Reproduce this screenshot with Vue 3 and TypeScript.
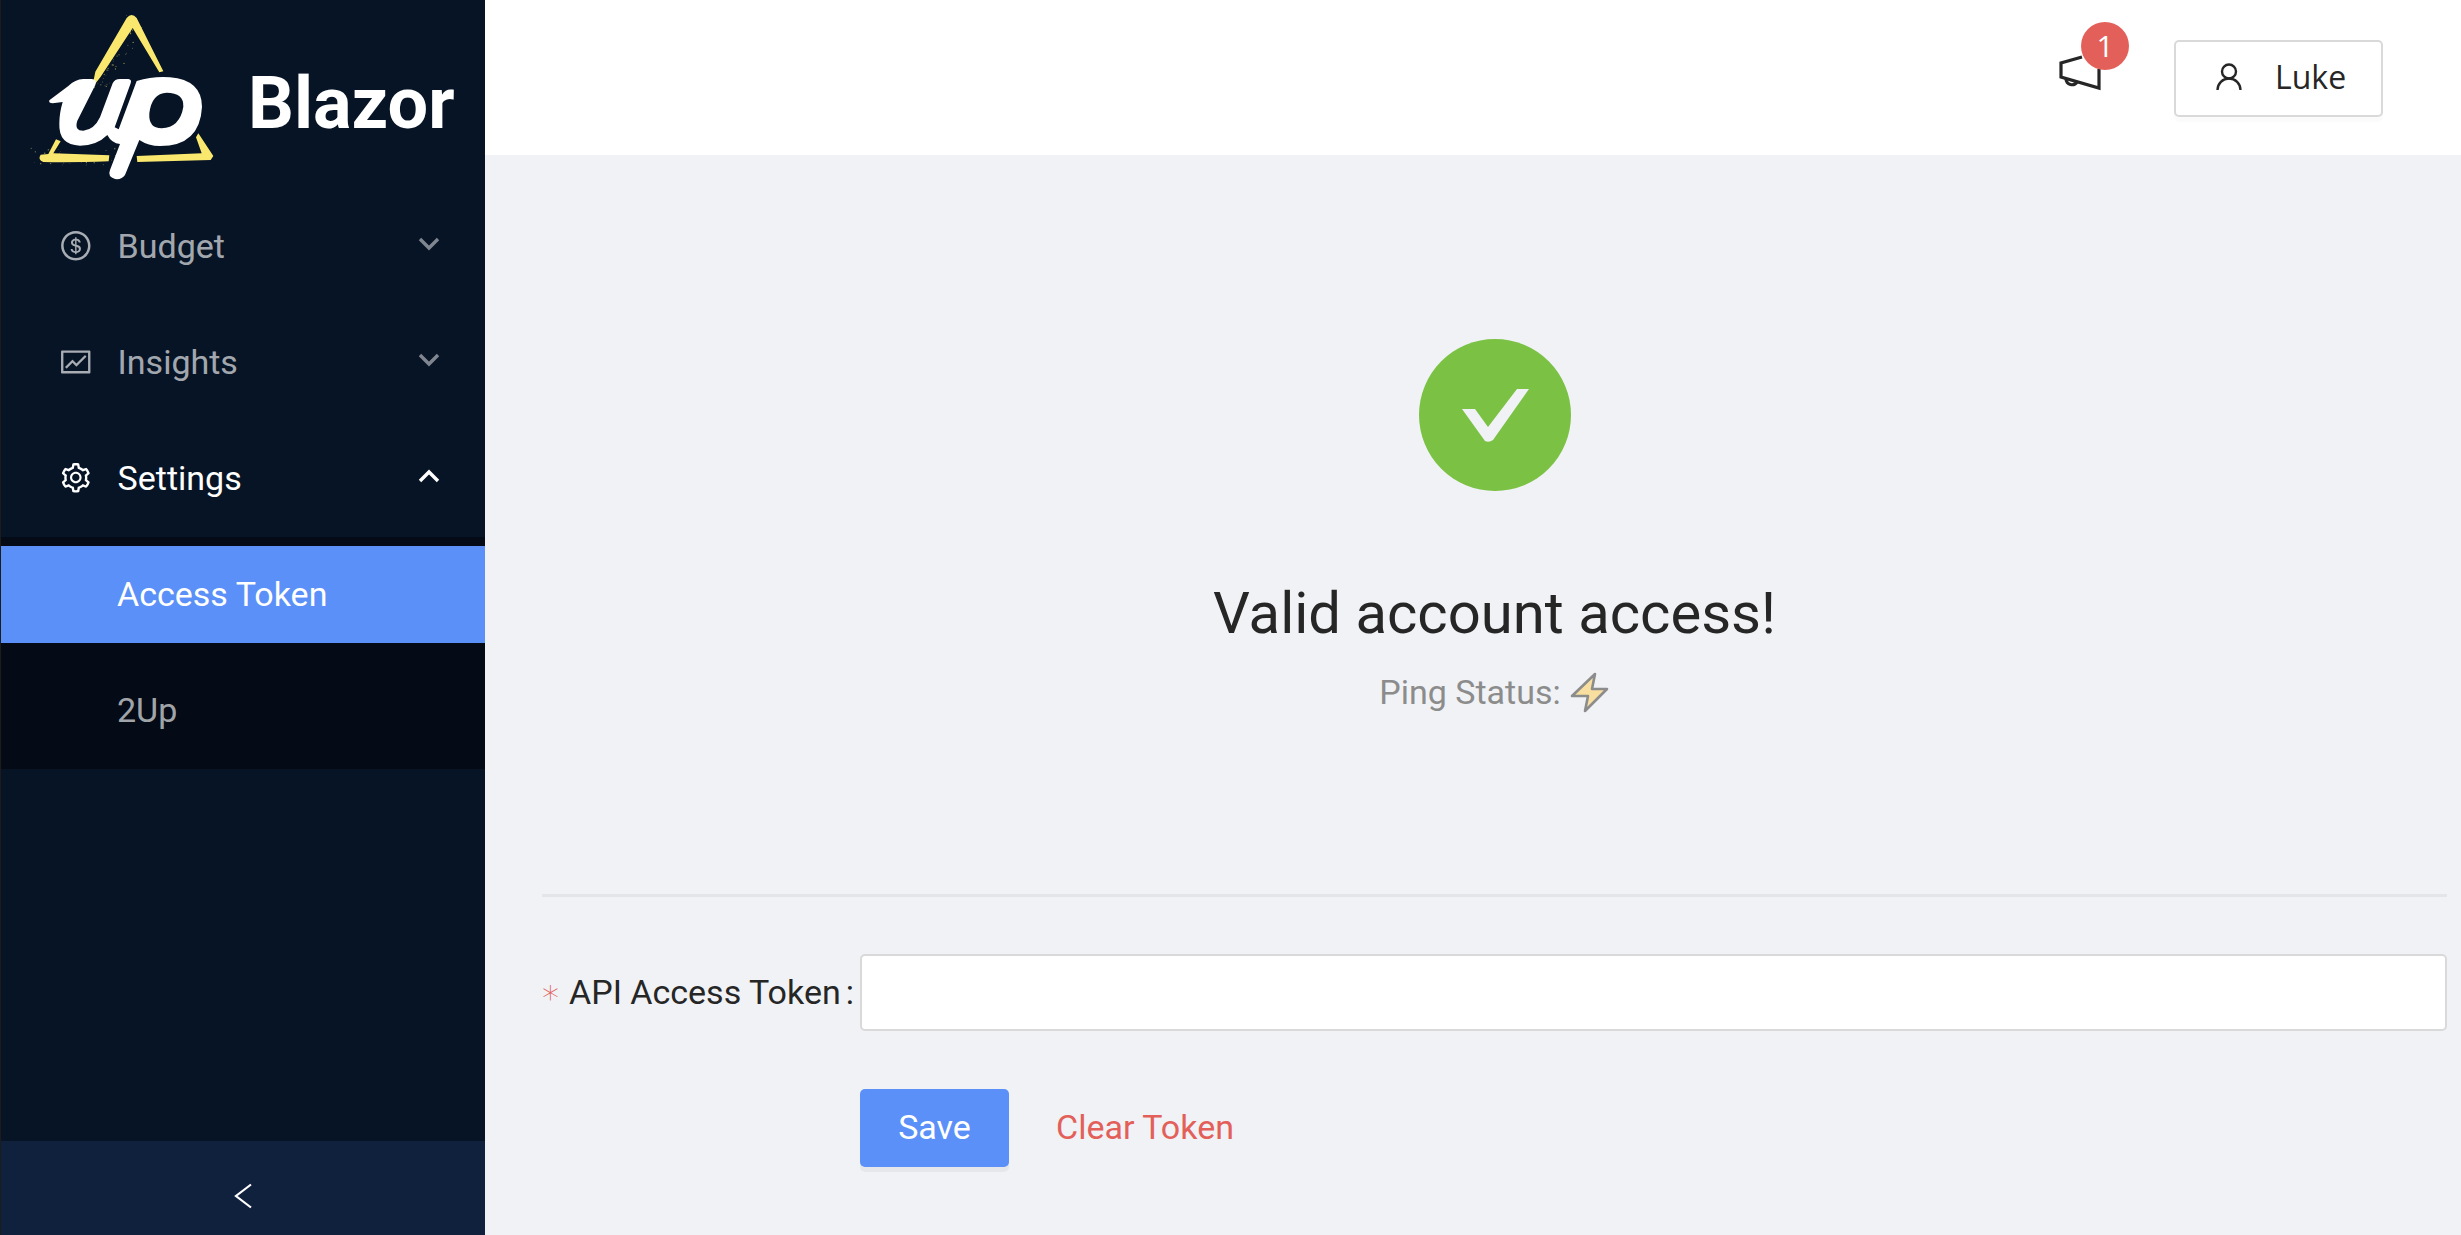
<template>
  <div class="layout">
    <aside class="sider">
      <div class="brand">
        <svg class="logo" viewBox="0 0 630 570">
          <g fill="#f9e86d">
            <path d="M216 264 L226 215 L320 54 Q335 36 350 54 L430 214 L418 217 L338 84 L242 230 Z" />
            <path d="M108 418 L122 424 L100 460 L268 466 L266 484 Q150 488 70 486 Q52 478 62 464 L85 462 Z" />
            <path d="M535 400 L580 468 L572 480 L352 486 L350 468 L545 460 L528 412 Z" />
            <circle v-for="(d, i) in dust" :key="i" :cx="d.x" :cy="d.y" :r="d.r" :opacity="d.o" />
          </g>
          <path
            fill="#fff"
            fill-rule="evenodd"
            d="M88 301 L145 258 Q165 238 190 237 L215 237 Q232 238 226 255 L172 362 Q162 392 190 392 Q222 390 240 352 L278 250 Q284 237 300 237 L325 237 Q336 238 332 250 L284 382 L296 388 L350 243 Q400 228 450 232 Q545 240 546 320 Q540 438 420 438 Q385 438 358 420 L315 525 Q305 540 285 537 Q262 530 270 510 L300 432 Q275 430 262 405 Q230 437 180 437 Q115 435 118 370 Q118 340 128 306 L98 310 Q85 310 88 301 Z M440 278 Q395 280 388 340 Q385 385 425 385 Q480 382 490 320 Q492 278 440 278 Z"
          />
        </svg>
        <span class="brand-name">Blazor</span>
      </div>

      <nav class="menu">
        <div v-for="item in menu" :key="item.label" class="menu-item" :class="{ open: item.open }">
          <svg class="menu-icon" viewBox="0 0 1024 1024" fill="currentColor">
            <path :d="item.icon" />
          </svg>
          <span class="menu-label">{{ item.label }}</span>
          <svg class="chevron" viewBox="0 0 22 14" fill="none" stroke="currentColor" stroke-width="3.4">
            <path :d="item.open ? 'M2 12 L11 3 L20 12' : 'M2 2 L11 11 L20 2'" />
          </svg>
        </div>
        <div class="submenu">
          <div class="sub-item selected">Access Token</div>
          <div class="sub-item">2Up</div>
        </div>
      </nav>

      <div class="collapse">
        <svg viewBox="0 0 18 26" width="18" height="26" fill="none" stroke="#fff" stroke-width="2.2">
          <path d="M17 1.5 L2 13 L17 24.5" />
        </svg>
      </div>
    </aside>

    <div class="main">
      <header class="topbar">
        <div class="notice">
          <svg class="megaphone" viewBox="0 0 42 36" fill="none" stroke="#262626" stroke-width="3.2">
            <path d="M23 2 L2 8 L2 22 L40 33 L40 14" />
            <path d="M7 24 A6 6 0 0 0 18 27" />
          </svg>
          <span class="badge">1</span>
        </div>
        <button class="user-btn">
          <svg class="user-icon" viewBox="0 0 26 27" fill="none" stroke="#262626" stroke-width="2.4">
            <circle cx="13" cy="8.5" r="7" />
            <path d="M1.5 27 A11.5 11.5 0 0 1 24.5 27" />
          </svg>
          <span>Luke</span>
        </button>
      </header>

      <main class="content">
        <section class="result">
          <svg class="result-icon" viewBox="0 0 152 152">
            <circle cx="76" cy="76" r="76" fill="#7bc144" />
            <path
              fill="#f0f2f5"
              d="M43 70 L56 70 L69 88 L98 50 L110 50 L74 101 Q70 104 66 102 Z"
            />
          </svg>
          <div class="result-title">Valid account access!</div>
          <div class="result-sub">
            Ping Status:
            <svg class="bolt" viewBox="-2 -2 40 41">
              <path
                fill="#f8dfa0"
                stroke="#8c8c8c"
                stroke-width="2.6"
                stroke-linejoin="round"
                d="M23 0 L0 22 L16 22 L13 37 L35 15 L20 15 Z"
              />
            </svg>
          </div>
        </section>

        <hr class="divider" />

        <form class="token-form" @submit.prevent>
          <label class="field-label" for="token">
            <span class="required">*</span>API Access Token<span class="colon">:</span>
          </label>
          <input id="token" v-model="token" class="field-input" type="text" />
          <div class="actions">
            <button class="btn-save" type="submit">Save</button>
            <button class="btn-clear" type="button" @click="token = ''">Clear Token</button>
          </div>
        </form>
      </main>
    </div>
  </div>
</template>

<script setup lang="ts">
import { ref } from "vue";

interface Speck {
  x: number;
  y: number;
  r: number;
  o: number;
}

const token = ref("");

const DOLLAR =
  "M512 64C264.6 64 64 264.6 64 512s200.6 448 448 448 448-200.6 448-448S759.4 64 512 64zm0 820c-205.4 0-372-166.6-372-372s166.6-372 372-372 372 166.6 372 372-166.6 372-372 372zm47.7-395.2l-25.4-5.9V348.6c38 5.2 61.5 29 65.5 58.2.5 4 3.9 6.9 7.9 6.9h44.9c4.7 0 8.4-4.1 8-8.8-6.1-62.3-57.4-102.3-125.9-109.2V263c0-4.4-3.6-8-8-8h-28.1c-4.4 0-8 3.6-8 8v33c-70.8 6.9-126.2 46-126.2 119 0 67.6 49.8 100.2 102.1 112.7l24.7 6.3v142.7c-44.2-5.9-69-29.5-74.1-61.3-.6-3.8-4-6.6-7.9-6.6H363c-4.7 0-8.4 4-8 8.7 4.5 55 46.2 105.6 135.2 112.1V761c0 4.4 3.6 8 8 8h28.4c4.4 0 8-3.6 8-8.1l-.2-31.7c78.3-6.9 134.3-48.8 134.3-124-.1-69.4-44.2-100.4-109-116.4zm-68.6-16.2c-5.6-1.6-10.3-3.1-15-5-33.8-12.2-49.5-31.9-49.5-57.3 0-36.3 27.5-57 64.5-61.7v124zM534.3 677V543.3c3.1.9 5.9 1.6 8.8 2.2 47.3 14.4 63.2 34.4 63.2 65.1 0 39.1-29.4 62.6-72 66.4z";
const FUND =
  "M926 164H94c-17.7 0-32 14.3-32 32v640c0 17.7 14.3 32 32 32h832c17.7 0 32-14.3 32-32V196c0-17.7-14.3-32-32-32zm-40 632H134V236h752v560zm-658.9-82.3c3.1 3.1 8.2 3.1 11.3 0l172.5-172.5 114.4 114.5c3.1 3.1 8.2 3.1 11.3 0l297-297.2c3.1-3.1 3.1-8.2 0-11.3l-36.8-36.8a8.03 8.03 0 0 0-11.3 0L531 565 416.6 450.5a8.03 8.03 0 0 0-11.3 0l-214.9 215a8.03 8.03 0 0 0 0 11.3l36.7 36.9z";
const GEAR =
  "M924.8 625.7l-65.5-56c3.1-19 4.7-38.4 4.7-57.8s-1.6-38.8-4.7-57.8l65.5-56a32.03 32.03 0 0 0 9.3-35.2l-.9-2.6a443.74 443.74 0 0 0-79.7-137.9l-1.8-2.1a32.12 32.12 0 0 0-35.1-9.5l-81.3 28.9c-30-24.6-63.5-44-99.7-57.6l-15.7-85a32.05 32.05 0 0 0-25.8-25.7l-2.7-.5c-52.1-9.4-106.9-9.4-159 0l-2.7.5a32.05 32.05 0 0 0-25.8 25.7l-15.8 85.4a351.86 351.86 0 0 0-99 57.4l-81.9-29.1a32 32 0 0 0-35.1 9.5l-1.8 2.1a446.02 446.02 0 0 0-79.7 137.9l-.9 2.6c-4.5 12.5-.8 26.5 9.3 35.2l66.3 56.6c-3.1 18.8-4.6 38-4.6 57.1 0 19.2 1.5 38.4 4.6 57.1L99 625.5a32.03 32.03 0 0 0-9.3 35.2l.9 2.6c18.1 50.4 44.9 96.9 79.7 137.9l1.8 2.1a32.12 32.12 0 0 0 35.1 9.5l81.9-29.1c29.8 24.5 63.1 43.9 99 57.4l15.8 85.4a32.05 32.05 0 0 0 25.8 25.7l2.7.5a449.4 449.4 0 0 0 159 0l2.7-.5a32.05 32.05 0 0 0 25.8-25.7l15.7-85a350 350 0 0 0 99.7-57.6l81.3 28.9a32 32 0 0 0 35.1-9.5l1.8-2.1c34.8-41.1 61.6-87.5 79.7-137.9l.9-2.6c4.5-12.3.8-26.3-9.3-35zM788.3 465.9c2.5 15.1 3.8 30.6 3.8 46.1s-1.3 31-3.8 46.1l-6.6 40.1 74.7 63.9a370.03 370.03 0 0 1-42.6 73.6L721 702.8l-31.4 25.8c-23.9 19.6-50.5 35-79.3 45.8l-38.1 14.3-17.9 97a377.5 377.5 0 0 1-85 0l-17.9-97.2-37.8-14.5c-28.5-10.8-55-26.2-78.7-45.7l-31.4-25.9-93.4 33.2c-17-22.9-31.2-47.6-42.6-73.6l75.5-64.5-6.5-40c-2.4-14.9-3.7-30.3-3.7-45.5 0-15.3 1.2-30.6 3.7-45.5l6.5-40-75.5-64.5c11.3-26.1 25.6-50.7 42.6-73.6l93.4 33.2 31.4-25.9c23.7-19.5 50.2-34.9 78.7-45.7l37.9-14.3 17.9-97.2c28.1-3.2 56.8-3.2 85 0l17.9 97 38.1 14.3c28.7 10.8 55.4 26.2 79.3 45.8l31.4 25.8 92.8-32.9c17 22.9 31.2 47.6 42.6 73.6L781.8 426l6.5 39.9zM512 326c-97.2 0-176 78.8-176 176s78.8 176 176 176 176-78.8 176-176-78.8-176-176-176zm79.2 255.2A111.6 111.6 0 0 1 512 614c-29.9 0-58-11.7-79.2-32.8A111.6 111.6 0 0 1 400 502c0-29.9 11.7-58 32.8-79.2C454 401.6 482.1 390 512 390c29.9 0 58 11.6 79.2 32.8A111.6 111.6 0 0 1 624 502c0 29.9-11.7 58-32.8 79.2z";

const menu = [
  { label: "Budget", icon: DOLLAR, open: false },
  { label: "Insights", icon: FUND, open: false },
  { label: "Settings", icon: GEAR, open: true },
];

// spray of paint around the logo triangle, seeded so it stays the same
const dust: Speck[] = [];
let seed = 7;
const rnd = (): number => {
  seed = (seed * 16807) % 2147483647;
  return seed / 2147483647;
};
for (let i = 0; i < 90; i++) {
  const t = rnd();
  const spread = rnd() * rnd() * 60;
  if (i % 3 === 0) {
    dust.push({ x: 60 + t * 240 + spread - 30, y: 470 + (rnd() - 0.5) * 50, r: 0.8 + rnd() * 1.2, o: 0.6 });
  } else {
    dust.push({
      x: 335 - t * 110 + spread * (rnd() > 0.3 ? 1 : -0.4),
      y: 50 + t * 210 + rnd() * 30 - 10,
      r: 0.8 + rnd() * 1.3,
      o: 0.65,
    });
  }
}
</script>

<style scoped>
.layout {
  display: flex;
  height: 1235px;
  font-family: Roboto, "Liberation Sans", sans-serif;
  font-size: 34px;
  color: #262626;
  background: #f0f2f5;
}

.sider {
  display: flex;
  flex-direction: column;
  flex: 0 0 485px;
  box-sizing: border-box;
  border-left: 1px solid #1c1c1c;
  background: #071426;
}

.brand {
  display: flex;
  align-items: center;
  height: 190px;
  flex: none;
}

.logo {
  flex: none;
  width: 210px;
  height: 190px;
  margin-left: 19px;
}

.brand-name {
  margin-left: 18px;
  margin-top: 16px;
  font-size: 72px;
  font-weight: 700;
  color: #fff;
}

.menu {
  flex: 1;
  padding-top: 8px;
}

.menu-item {
  display: flex;
  align-items: center;
  height: 96px;
  margin-bottom: 20px;
  padding: 0 45px 0 58px;
  color: rgba(255, 255, 255, 0.65);
}

.menu-item.open {
  margin-bottom: 11px;
  color: #fff;
}

.menu-icon {
  flex: none;
  width: 33.6px;
  height: 33.6px;
}

.menu-label {
  flex: 1;
  margin-left: 25px;
}

.chevron {
  flex: none;
  width: 22px;
  height: 14px;
  margin-top: -4px;
  opacity: 0.75;
}

.open .chevron {
  opacity: 1;
}

.submenu {
  padding: 9px 0 10px;
  background: #040b16;
}

.sub-item {
  display: flex;
  align-items: center;
  box-sizing: border-box;
  height: 97px;
  padding: 0 0 2px 116px;
  color: rgba(255, 255, 255, 0.65);
}

.sub-item + .sub-item {
  margin-top: 19px;
}

.sub-item.selected {
  background: #5a90f8;
  color: #fff;
}

.collapse {
  display: flex;
  align-items: center;
  justify-content: center;
  flex: none;
  box-sizing: border-box;
  height: 94px;
  padding-top: 16px;
  background: #10213d;
}

.main {
  flex: 1;
  display: flex;
  flex-direction: column;
  min-width: 0;
}

.topbar {
  display: flex;
  align-items: center;
  justify-content: flex-end;
  flex: none;
  height: 155px;
  padding-right: 78px;
  background: #fff;
}

.notice {
  position: relative;
  width: 42px;
  height: 36px;
  margin: -10px 73px 0 0;
}

.megaphone {
  display: block;
  width: 42px;
  height: 36px;
}

.badge {
  position: absolute;
  left: 22px;
  top: -33px;
  width: 48px;
  height: 48px;
  border-radius: 50%;
  background: #e3605a;
  color: #fff;
  font-family: "Open Sans", sans-serif;
  font-size: 30px;
  line-height: 48px;
  text-align: center;
}

.user-btn {
  display: flex;
  align-items: center;
  box-sizing: border-box;
  width: 209px;
  height: 77px;
  margin-top: 2px;
  padding: 0 0 5px 40px;
  border: 2.4px solid #d9d9d9;
  border-radius: 5px;
  background: #fff;
  box-shadow: 0 5px 0 rgba(0, 0, 0, 0.015);
  color: #262626;
  font-family: "Open Sans", sans-serif;
  font-size: 32px;
}

.user-icon {
  flex: none;
  width: 26px;
  height: 27px;
  margin-right: 33px;
}

.content {
  flex: 1;
  padding: 184px 14px 0 57px;
}

.result {
  display: flex;
  flex-direction: column;
  align-items: center;
}

.result-icon {
  display: block;
  width: 152px;
  height: 152px;
}

.result-title {
  margin-top: 84px;
  font-size: 58px;
  line-height: 77px;
  color: #262626;
}

.result-sub {
  display: flex;
  align-items: center;
  gap: 9px;
  margin-top: 14px;
  line-height: 53px;
  color: #8c8c8c;
}

.bolt {
  width: 40px;
  height: 41px;
}

.divider {
  height: 3px;
  margin: 175px 0 57px;
  border: 0;
  background: #e3e5e8;
}

.token-form {
  display: grid;
  grid-template-columns: 318px 1fr;
  row-gap: 58px;
  align-items: center;
}

.field-label {
  display: flex;
  align-items: center;
  padding-bottom: 2px;
  color: #262626;
}

.required {
  width: 27px;
  margin-top: 12px;
  color: #e3605a;
  font-family: "DejaVu Sans", sans-serif;
  font-size: 34px;
  font-weight: 200;
  line-height: 34px;
}

.colon {
  margin-left: 5px;
}

.field-input {
  box-sizing: border-box;
  width: 100%;
  height: 77px;
  padding: 0 26px;
  border: 2.4px solid #d9d9d9;
  border-radius: 5px;
  background: #fff;
  font: inherit;
  outline: none;
}

.actions {
  grid-column: 2;
  display: flex;
  align-items: center;
  gap: 47px;
}

.btn-save {
  width: 149px;
  height: 78px;
  padding-bottom: 3px;
  border: 0;
  border-radius: 5px;
  background: #5a90f8;
  box-shadow: 0 5px 0 rgba(0, 0, 0, 0.045);
  color: #fff;
  font: inherit;
}

.btn-clear {
  padding: 0 0 3px;
  border: 0;
  background: none;
  color: #e3605a;
  font: inherit;
}
</style>

<style>
html,
body {
  margin: 0;
  overflow: hidden;
}
</style>
